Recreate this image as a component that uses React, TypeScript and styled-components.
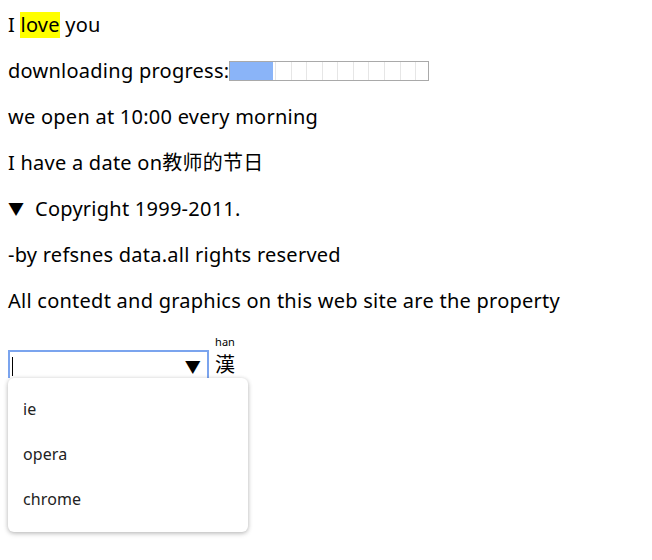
import React from "react";
import styled, { createGlobalStyle } from "styled-components";

const Global = createGlobalStyle`
  html, body { margin: 0; padding: 0; background: #fff; }
  body {
    font-family: "Noto Sans", "Noto Sans CJK SC", sans-serif;
    color: #000;
  }
`;

const Page = styled.div`
  display: flex;
  flex-direction: column;
  align-items: flex-start;
  gap: 20px;
  padding: 12px 8px 190px 8px;
  font-size: 20px;
  line-height: 26px;
  letter-spacing: 0.25px;
`;

const Line = styled.div`
  display: flex;
  align-items: center;
  white-space: nowrap;
  height: 26px;
`;

const Mark = styled.span`
  background: #ffff00;
`;

const Progress = styled.div`
  width: 200px;
  height: 20px;
  box-sizing: border-box;
  border: 1px solid #a9a9a9;
  display: flex;
  background: repeating-linear-gradient(
    to right,
    transparent 0px,
    transparent 14px,
    #e6e6e6 14px,
    #e6e6e6 15px,
    transparent 15px,
    transparent 15.55px
  );
`;

const Fill = styled.div<{ $w: number }>`
  width: ${(p) => p.$w}px;
  height: 100%;
  background: #8ab4f8;
  border-right: 2px solid #fff;
`;

const Triangle = styled.span`
  font-size: 16px;
  width: 27px;
  display: inline-block;
`;

const FormRow = styled.div`
  display: flex;
  align-items: flex-end;
  gap: 6px;
  margin-top: 1px;
  position: relative;
`;

const InputBox = styled.div`
  width: 201px;
  height: 28px;
  box-sizing: border-box;
  border: 2px solid #7ba4ee;
  border-bottom: none;
  display: flex;
  align-items: center;
  justify-content: space-between;
  padding: 0 6px 0 2px;
`;

const Caret = styled.span`
  width: 1px;
  height: 19px;
  background: #000;
  margin-top: 2px;
`;

const Arrow = styled.span`
  font-size: 16px;
  line-height: 1;
  margin-top: 3px;
`;

const RubyWrap = styled.span`
  display: inline-flex;
  flex-direction: column;
  align-items: center;
  gap: 4px;
  margin-bottom: 2px;
`;

const RubyText = styled.span`
  font-family: "Noto Sans", sans-serif;
  font-size: 11px;
  line-height: 13px;
  letter-spacing: 0;
`;

const RubyBase = styled.span`
  font-family: "Noto Sans CJK JP", "Noto Sans CJK SC", sans-serif;
  font-size: 20px;
  line-height: 24px;
  letter-spacing: 0;
`;

const Popup = styled.div`
  position: absolute;
  left: 0;
  top: 100%;
  width: 240px;
  padding: 8px 0 11px;
  box-sizing: border-box;
  background: #fff;
  border-radius: 6px;
  box-shadow: 0 1px 4px rgba(0, 0, 0, 0.25), 0 2px 6px rgba(0, 0, 0, 0.08);
`;

const Option = styled.div`
  height: 45px;
  display: flex;
  align-items: center;
  padding-left: 15px;
  font-size: 16px;
  letter-spacing: 0.1px;
  color: #222;
`;

export default function App() {
  return (
    <>
      <Global />
      <Page>
        <Line>
          I&nbsp;<Mark>love</Mark>&nbsp;you
        </Line>
        <Line>
          downloading progress:
          <Progress>
            <Fill $w={43} />
          </Progress>
        </Line>
        <Line>we open at 10:00 every morning</Line>
        <Line>I have a date on教师的节日</Line>
        <Line>
          <Triangle>▼</Triangle>Copyright 1999-2011.
        </Line>
        <Line>-by refsnes data.all rights reserved</Line>
        <Line>All contedt and graphics on this web site are the property</Line>
        <FormRow>
          <InputBox>
            <Caret />
            <Arrow>▼</Arrow>
          </InputBox>
          <RubyWrap>
            <RubyText>han</RubyText>
            <RubyBase>漢</RubyBase>
          </RubyWrap>
          <Popup>
            <Option>ie</Option>
            <Option>opera</Option>
            <Option>chrome</Option>
          </Popup>
        </FormRow>
      </Page>
    </>
  );
}
